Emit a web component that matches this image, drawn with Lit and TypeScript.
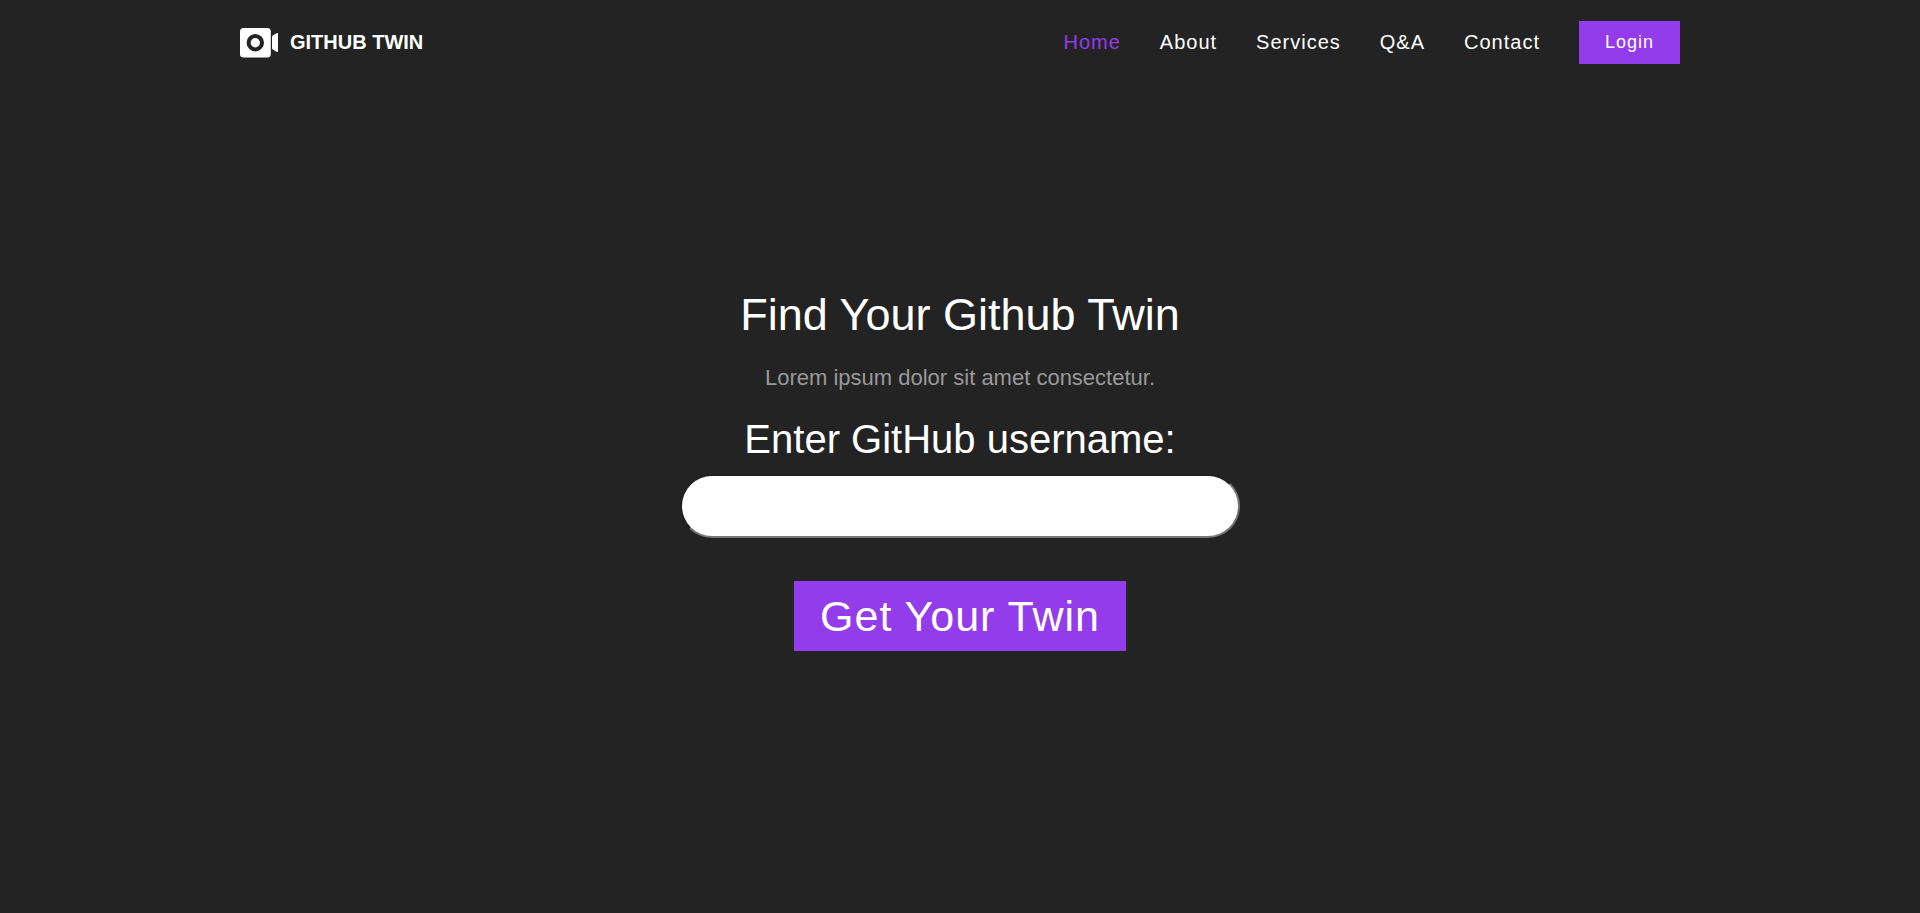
import { LitElement, html, css } from "lit";
import { customElement } from "lit/decorators.js";

const LINKS = ["Home", "About", "Services", "Q&A", "Contact"];

@customElement("app-root")
export class AppRoot extends LitElement {
  static styles = css`
    :host {
      display: flex;
      flex-direction: column;
      min-height: 100vh;
      background: #232323;
      color: #fff;
      font-family: "Liberation Sans", Arial, sans-serif;
    }
    .header {
      box-sizing: border-box;
      width: 100%;
      max-width: 1480px;
      margin: 0 auto;
      padding: 21px 20px;
      display: flex;
      align-items: center;
      justify-content: space-between;
    }
    .brand {
      display: flex;
      align-items: center;
      gap: 12px;
      color: inherit;
      text-decoration: none;
      font-size: 20px;
      font-weight: 700;
    }
    .logo {
      display: block;
      width: 38px;
      height: 30px;
    }
    .nav {
      display: flex;
      align-items: center;
      gap: 39px;
    }
    .link {
      color: inherit;
      text-decoration: none;
      font-size: 20px;
      letter-spacing: 1px;
    }
    .link.active {
      color: #933cec;
    }
    .button {
      border: 0;
      padding: 11px 26px;
      background: #933cec;
      color: #fff;
      font-family: inherit;
      font-size: 18px;
      line-height: 21px;
      letter-spacing: 1px;
      cursor: pointer;
    }
    .main {
      flex: 1;
      display: flex;
      flex-direction: column;
      align-items: center;
      justify-content: center;
      padding-bottom: 59px;
      text-align: center;
    }
    .title {
      margin: 0 0 22px;
      font-size: 45px;
      font-weight: 400;
      line-height: 52px;
    }
    .lead {
      margin: 0 0 23px;
      color: #999;
      font-size: 22px;
      line-height: 30px;
    }
    .form {
      display: flex;
      flex-direction: column;
      align-items: center;
      max-width: 100%;
    }
    .label {
      margin-bottom: 12px;
      font-size: 40px;
      line-height: 46px;
    }
    .field {
      box-sizing: border-box;
      width: 560px;
      max-width: 100%;
      height: 64px;
      margin-bottom: 43px;
      padding: 0 24px;
      border: 2px inset #767676;
      border-radius: 32px;
      background: #fff;
      color: #232323;
      font-family: inherit;
      font-size: 24px;
    }
    .button.large {
      font-size: 43px;
      line-height: 48px;
    }
  `;

  render() {
    return html`
      <header class="header">
        <a class="brand" href="#">
          <svg class="logo" viewBox="0 0 38 30" aria-hidden="true">
            <rect width="30.8" height="29.6" rx="3.5" fill="#fff" />
            <circle cx="15.3" cy="14.7" r="6.7" fill="none" stroke="#232323" stroke-width="4" />
            <path d="M32 9.2 Q32 8.2 32.8 7.6 L36 5.6 Q38 4.6 38 5.6 V23.4 Q38 24.6 36 23.6 L32.8 21.6 Q32 21 32 20 Z" fill="#fff" />
          </svg>
          <span>GITHUB TWIN</span>
        </a>
        <nav class="nav">
          ${LINKS.map(
            (name, i) => html`<a class="link ${i === 0 ? "active" : ""}" href="#">${name}</a>`
          )}
          <button class="button" type="button">Login</button>
        </nav>
      </header>
      <main class="main">
        <h1 class="title">Find Your Github Twin</h1>
        <p class="lead">Lorem ipsum dolor sit amet consectetur.</p>
        <form class="form" @submit=${(e: Event) => e.preventDefault()}>
          <label class="label" for="username">Enter GitHub username:</label>
          <input class="field" id="username" type="text" autocomplete="off" />
          <button class="button large" type="submit">Get Your Twin</button>
        </form>
      </main>
    `;
  }
}
